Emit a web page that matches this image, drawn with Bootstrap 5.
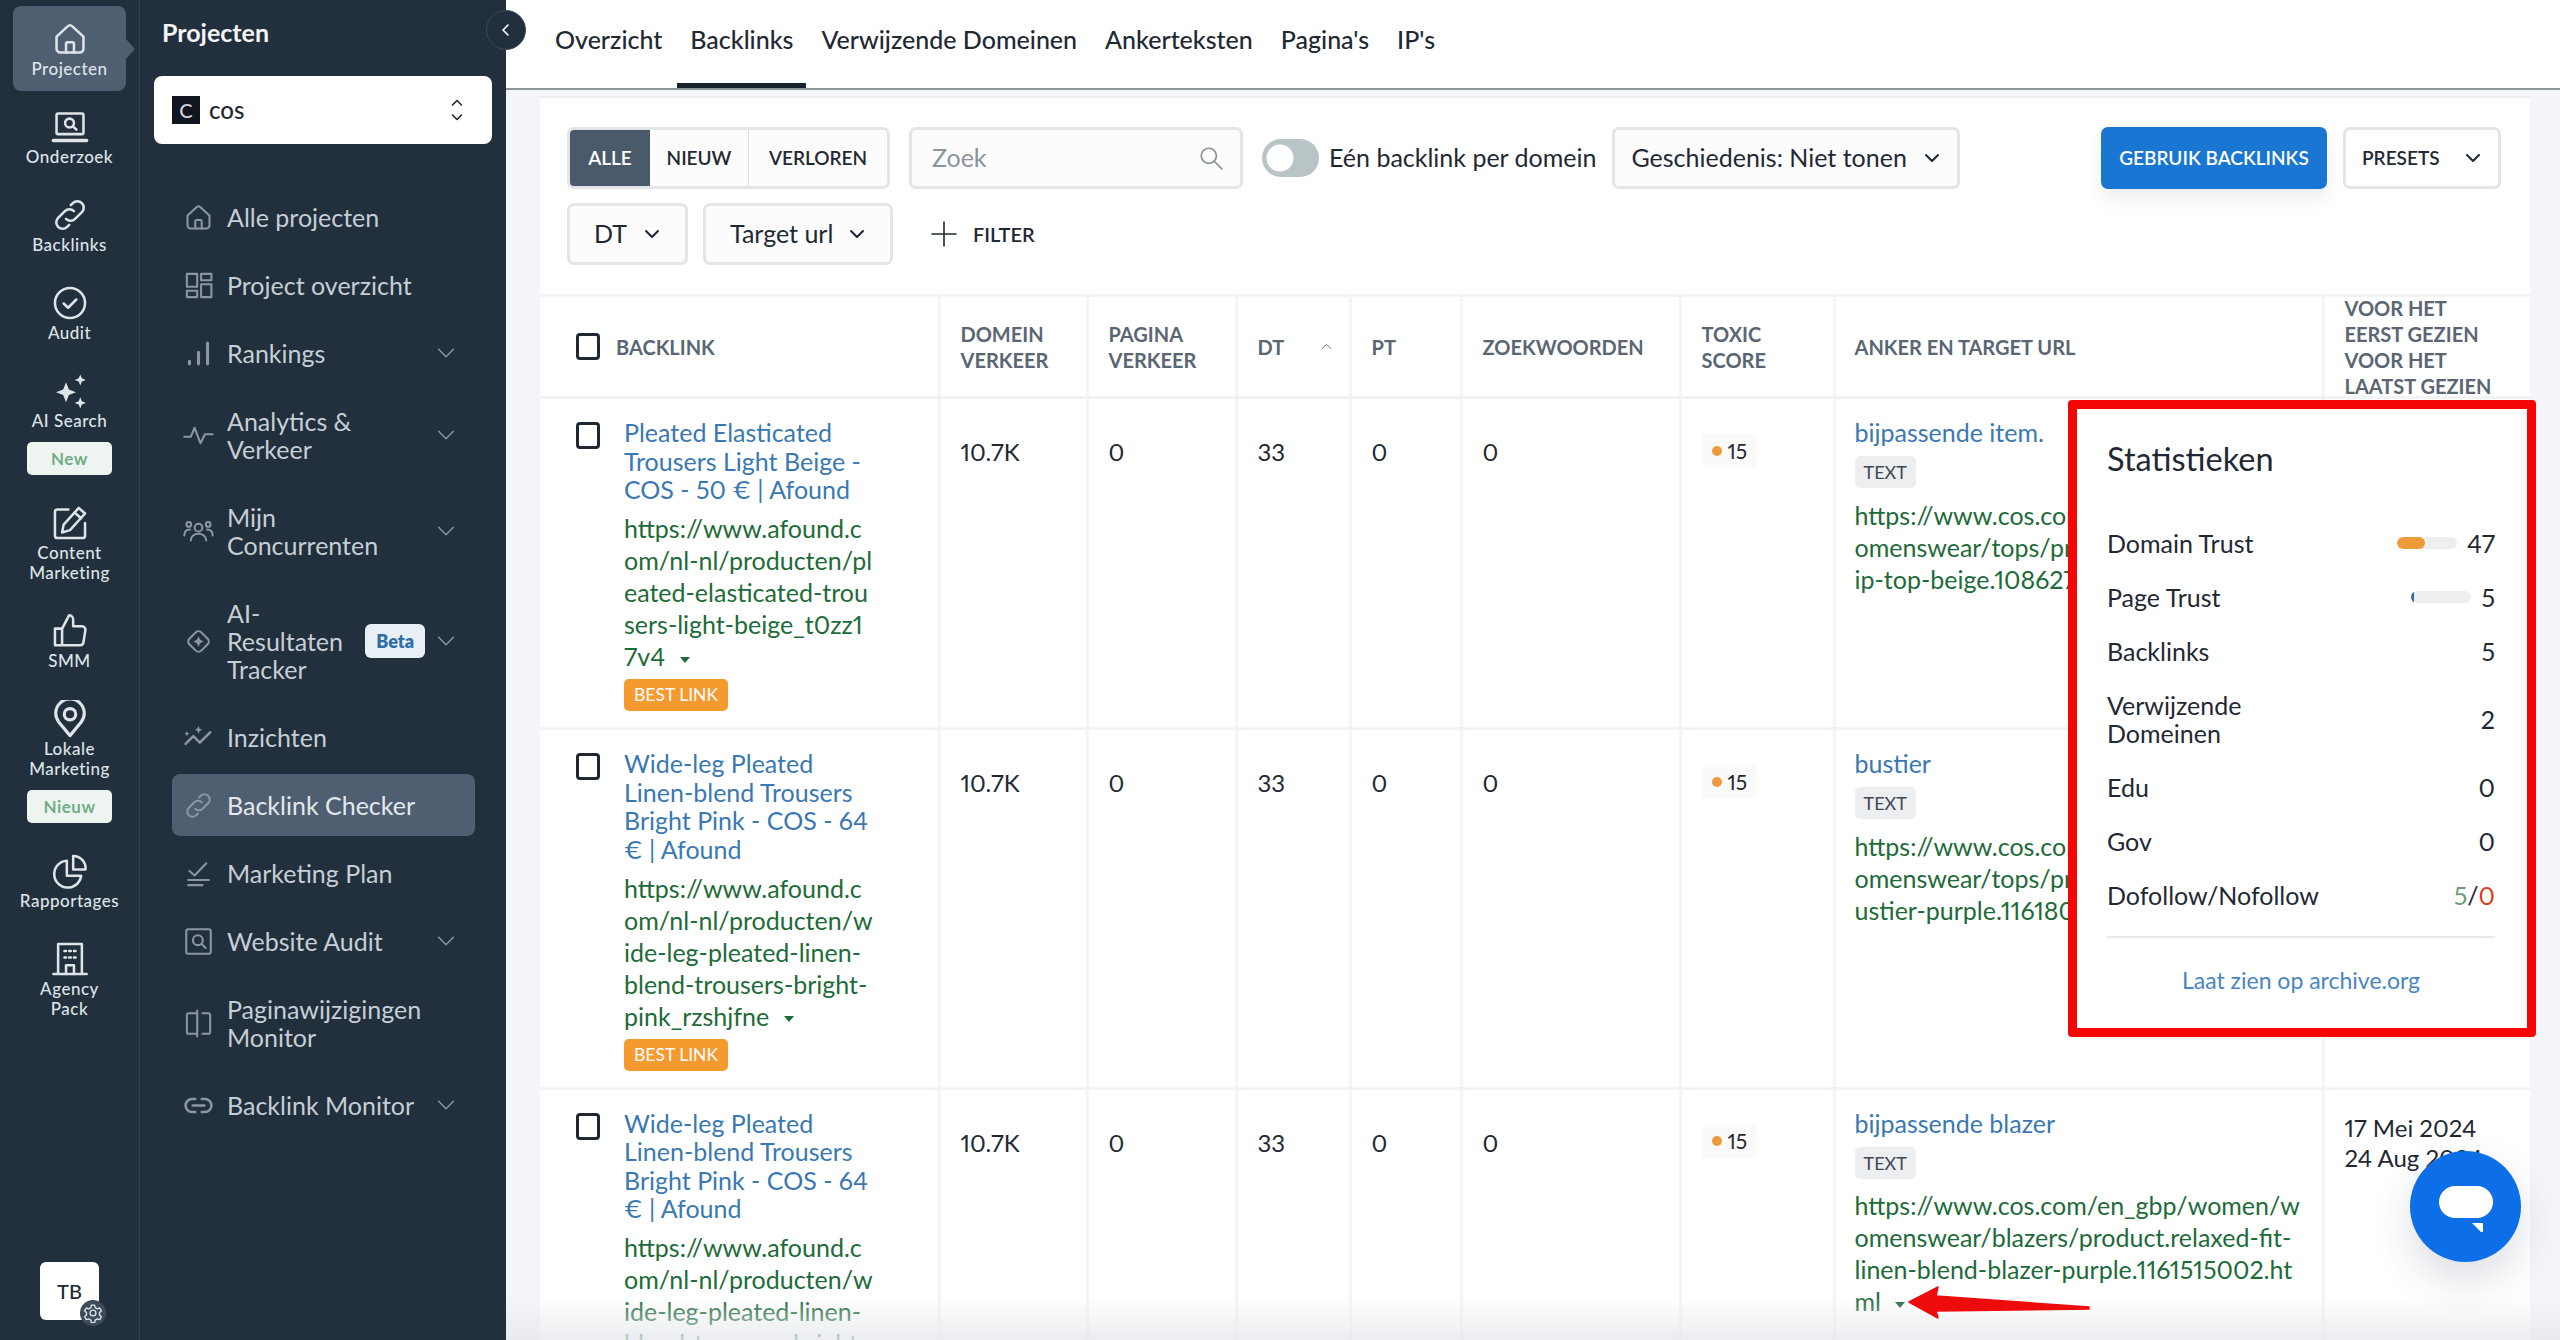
<!DOCTYPE html>
<html lang="nl">
<head>
  <meta charset="UTF-8" />
  <meta name="viewport" content="width=device-width, initial-scale=1.0"/>
  <title>Backlink Checker</title>
  <link href="https://cdn.jsdelivr.net/npm/bootstrap@5.3.3/dist/css/bootstrap.min.css" rel="stylesheet" />
  <style>
    html, body { height: 1340px; overflow: hidden; }
    body { font-family: "Lato", "Liberation Sans", sans-serif; font-size: 24px; color: #1f2933; background: #f4f5f9; font-variant-numeric: proportional-nums; }
    .app-shell { height: 1340px; position: relative; overflow: hidden; }
    .ico { fill: none; stroke: currentColor; stroke-width: 1.6; stroke-linecap: round; stroke-linejoin: round; flex: none; }

    /* icon rail */
    .rail { width: 140px; flex: none; background: #222f3c; border-right: 1px solid #34414e; padding: 6px 13px 20px; color: #dfe4e9; }
    .rail-item { padding: 18px 0 12px; margin-bottom: 3px; border-radius: 8px; font-size: 17px; line-height: 20px; font-weight: 500; text-align: center; position: relative; letter-spacing: .5px; }
    .rail-item .ico { width: 38px; height: 38px; display: block; margin: -4px auto 1px; }
    .rail-item.on { background: #4f5e70; }
    .rail-item.on::after { content: ""; position: absolute; right: -9px; top: 33px; border-left: 9px solid #4f5e70; border-top: 10px solid transparent; border-bottom: 10px solid transparent; }
    .rail-pill { background: #eef5f1; color: #72ad88; font-weight: 700; font-size: 17px; border-radius: 5px; margin: 11px 14px 0; height: 33px; line-height: 33px; }
    .rail-user { width: 59px; height: 58px; background: #fff; color: #1f2933; border-radius: 6px; font-size: 20px; line-height: 58px; text-align: center; margin: auto auto 0; position: relative; font-weight: 500; }
    .rail-gear { position: absolute; right: -7px; bottom: -6px; width: 26px; height: 26px; border-radius: 50%; background: #3d4b5a; color: #dfe4e9; display: flex; align-items: center; justify-content: center; }

    /* second panel */
    .side-panel { width: 366px; flex: none; background: #222f3c; padding: 0 14px 0 14px; color: #c6ced6; }
    .side-title { font-size: 25px; font-weight: 700; color: #f3f5f7; line-height: 32px; padding: 16px 0 0 8px; }
    .project-pick { height: 68px; margin: 28px 0 39px; background: #fff; border-radius: 8px; color: #1f2933; padding: 0 29px 0 18px; font-size: 24px; font-weight: 500; }
    .project-logo { width: 28px; height: 28px; background: #10151f; color: #cfd3d8; font-size: 20px; line-height: 28px; text-align: center; margin-right: 9px; }
    .side-link { display: flex; align-items: center; margin-left: 18px; width: 303px; min-height: 68px; padding: 20px 0 20px 11px; line-height: 28px; font-size: 25px; color: #c6ced6; border-radius: 8px; text-decoration: none; }
    .side-link > .ico { width: 31px; height: 31px; color: #8a97a3; margin: -2px 13px -2px 0; }
    .side-link > .ico.side-chev { width: 22px; height: 22px; margin: 0 18px 0 0; }
    .side-link.on { background: #4f5e70; color: #e4e8ec; min-height: 62px; margin-top: 3px; margin-bottom: 3px; padding-top: 17px; padding-bottom: 17px; }
    .side-label { flex: 1; min-width: 0; }
    .beta-tag { background: #e9f0f5; color: #2f6ea8; font-size: 18px; font-weight: 800; border-radius: 6px; padding: 0 11px; line-height: 34px; margin-right: 10px; }
    .collapse-btn { position: absolute; left: 486px; top: 10px; width: 40px; height: 40px; border-radius: 50%; background: #222f3c; border: 1px solid #3c4956; color: #fff; display: flex; align-items: center; justify-content: center; z-index: 3; }

    /* top tabs */
    .main-col { min-width: 0; background: #f4f5f9; }
    .tabbar { height: 90px; background: #fff; border-bottom: 2px solid #8e969d; padding-left: 36px; flex: none; }
    .tabbar .nav-link { color: #1f2933; font-size: 25px; padding: 21px 13px 0; height: 88px; margin-right: 2px; font-weight: 500; }
    .tabbar .nav-link.on { border-bottom: 5px solid #17212b; }

    /* filters */
    .work-card { background: #fff; margin: 6px 30px 0 34px; border-top: 2px solid #eceef1; }
    .filter-box { padding: 29px 29px 0 27px; }
    .ctl { height: 62px; background: #fcfcfd; border: 3px solid #e3e5e9; border-radius: 7px; font-size: 25px; display: flex; align-items: center; color: #1f2933; flex: none; }
    .seg-btn { font-size: 19px; font-weight: 600; padding: 0; height: 100%; border: 0; background: transparent; color: #1f2933; }
    .seg-btn.on { background: #4a5a6b; color: #fff; border-radius: 4px 0 0 4px; }
    .search-hint { color: #8b949c; }
    .one-switch.form-check-input { width: 57px; height: 38px; margin: 0; border: 0; background-color: #b9c4c6; background-image: radial-gradient(circle at 18px 19px, #fff 13px, transparent 14px); }
    .ghost-chev { width: 18px; height: 18px; color: #1f2933; stroke-width: 2.8; }
    .use-btn { height: 62px; background: #1976d2; border: 0; border-radius: 7px; color: #fff; font-size: 19px; font-weight: 600; width: 226px; box-shadow: 0 10px 18px rgba(25,40,70,.08); }
    .preset-btn { background: #fff; font-size: 19px; font-weight: 600; }
    .filter-add { font-size: 20px; font-weight: 600; margin-left: 15px; }

    /* table */
    .bl-table { table-layout: fixed; width: 1990px; margin: 29px 0 0; border-top: 3px solid #f2f3f5; font-size: 25px; }
    .bl-table > * > tr > * { padding: 0 20px; border-bottom: 3px solid #f2f3f5; border-right: 3px solid #f4f5f7; color: #1f2933; box-shadow: none; }
    .bl-table > * > tr > *:last-child { border-right: 0; }
    .bl-table th { font-size: 20px; line-height: 26px; font-weight: 700; color: #5a6673 !important; height: 102px; vertical-align: middle; text-transform: uppercase; padding-right: 0 !important; }
    .th-tall { margin: -4px 0; }
    .bl-table td { vertical-align: top; }
    .num-cell { padding-top: 39px !important; line-height: 28px; font-size: 24px; }
    .tick { width: 24px; height: 27px; border: 3px solid #1f2933; border-radius: 4px; flex: none; background: #fff; }
    .link-cell { padding: 19px 10px 16px 36px !important; }
    .page-title { color: #3a78b3; line-height: 28.5px; text-decoration: none; display: block; }
    .page-url { color: #1d6b39; line-height: 32px; margin-top: 8.5px; white-space: nowrap; }
    .drop-tri { display: inline-block; border-top: 6px solid #1d6b39; border-left: 5px solid transparent; border-right: 5px solid transparent; vertical-align: middle; margin-left: 8px; }
    .best-tag { background: #f59a2f; color: #fff; font-size: 17.500px; font-weight: 400; border-radius: 5px; padding: 0 10px; line-height: 32px; display: inline-block; margin-top: 7px; }
    .toxic-tag { background: #fafaf8; border-radius: 5px; display: inline-flex; align-items: center; gap: 6px; padding: 0 10px; height: 33px; font-size: 21px; margin-top: -4px; vertical-align: top; }
    .toxic-dot { width: 10px; height: 10px; border-radius: 50%; background: #ec9a3c; }
    .anchor-cell { padding: 19px 10px 0 19px !important; white-space: nowrap; overflow: hidden; }
    .anchor-link { color: #3a78b3; line-height: 28px; text-decoration: none; display: block; }
    .type-tag { background: #eceef0; color: #3f4953; font-size: 18px; font-weight: 400; border-radius: 5px; padding: 0 9px; line-height: 32px; display: inline-block; margin-top: 10px; }
    .anchor-cell .page-url { margin-top: 10px; }
    .date-cell { padding-top: 23px !important; line-height: 30px; white-space: nowrap; font-size: 24px; }

    /* stats popover */
    .stats-pop { position: absolute; left: 2068px; top: 400px; width: 468px; height: 637px; background: #fff; border: 9px solid #f60505; border-radius: 4px; padding: 31px 32px 0 30px; z-index: 2; font-size: 25px; }
    .stats-head { font-size: 32.500px; line-height: 38px; margin-bottom: 38px; color: #1f2933; }
    .stat-row { min-height: 54px; line-height: 28px; padding: 13px 0; color: #1f2933; }
    .stat-bar { height: 12px; background: #eceef0; border-radius: 6px; width: 60px; }
    .stat-bar .progress-bar { border-radius: 6px; }
    .stat-val { gap: 10px; }
    .stats-foot { border-top: 2px solid #e7e9ec; margin-top: 14px; padding-top: 28px; text-align: center; color: #4a86c0; line-height: 28px; font-size: 23px; }

    /* overlays */
    .bottom-fade { position: absolute; left: 506px; right: 0; bottom: 0; height: 44px; background: linear-gradient(to bottom, rgba(232,234,238,0), rgba(230,232,236,.8)); pointer-events: none; z-index: 1; }
    .chat-fab { position: absolute; left: 2410px; top: 1151px; width: 111px; height: 111px; border-radius: 50%; background: #0d6fe8; z-index: 2; display: flex; align-items: center; justify-content: center; box-shadow: 0 18px 40px rgba(30,50,90,.16); }
    .red-arrow { position: absolute; left: 1905px; top: 1284px; z-index: 2; }
  </style>
</head>
<body>
  <svg width="0" height="0" class="position-absolute">
    <symbol id="i-home" viewBox="0 0 24 24"><path d="M3.5 10.5 10.5 4a2.2 2.2 0 0 1 3 0l7 6.500V18a2.500 2.500 0 0 1-2.500 2.500H6A2.500 2.500 0 0 1 3.500 18z"/><path d="M9.500 20.500V15a1 1 0 0 1 1-1h3a1 1 0 0 1 1 1v5.500"/></symbol>
    <symbol id="i-research" viewBox="0 0 24 24"><rect x="3.500" y="3.500" width="17" height="13" rx="1"/><path d="M1.500 20.500h21" stroke-width="2.200"/><circle cx="11.700" cy="9.500" r="2.800"/><path d="m13.800 11.600 2.200 2"/></symbol>
    <symbol id="i-link" viewBox="0 0 24 24"><path d="M9.500 14.500a4 4 0 0 0 5.700 0l4.300-4.300a4 4 0 0 0-5.700-5.700l-1.300 1.300"/><path d="M14.500 9.500a4 4 0 0 0-5.700 0l-4.300 4.300a4 4 0 0 0 5.700 5.700l1.300-1.300"/></symbol>
    <symbol id="i-check" viewBox="0 0 24 24"><circle cx="12" cy="12" r="9.500"/><path d="m8 12.300 2.800 2.700 5.200-5.200"/></symbol>
    <symbol id="i-spark" viewBox="0 0 24 24"><path fill="currentColor" stroke="none" d="M9.500 6.500 11.300 11l4.500 1.800-4.500 1.800-1.800 4.500-1.800-4.500-4.500-1.800L7.700 11zM18.500 1.500l1 2.500 2.500 1-2.500 1-1 2.500-1-2.500-2.500-1 2.500-1zM18.500 16l1 2.500 2.500 1-2.500 1-1 2.500-1-2.500-2.500-1 2.500-1z"/></symbol>
    <symbol id="i-edit" viewBox="0 0 24 24"><path d="M11 3.500H4A1.500 1.500 0 0 0 2.500 5v15A1.500 1.500 0 0 0 4 21.500h16a1.500 1.500 0 0 0 1.500-1.500v-8"/><path d="m17.500 2.500 4 3.500L12 16.500l-5 1.500 1-5z"/><path d="m15 5.500 4 3.500"/></symbol>
    <symbol id="i-thumb" viewBox="0 0 24 24"><path d="M7 10.500H2.500V21H7zM7 10.500l4.500-8.500a2.800 2.800 0 0 1 2.500 3v4h5.500a2.200 2.200 0 0 1 2.200 2.600l-1.200 7.500a2.200 2.200 0 0 1-2.200 1.900H7"/></symbol>
    <symbol id="i-pin" viewBox="0 0 24 24"><path d="M12 22.500 5 14a9 9 0 1 1 14 0z" stroke-width="2"/><circle cx="12" cy="9" r="3.600" stroke-width="2"/></symbol>
    <symbol id="i-pie" viewBox="0 0 24 24"><path d="M10 5.500a8.500 8.500 0 1 0 9 9.500h-9z"/><path d="M14 2.500a7.800 7.800 0 0 1 7.800 8.500H14z"/></symbol>
    <symbol id="i-build" viewBox="0 0 24 24"><path d="M4.500 21.500v-19h15v19M1.500 21.500h21"/><path d="M9.500 21.500V16h5v5.500M8.500 7h1M11.500 7h1M14.500 7h1M8.500 11h1M11.500 11h1M14.500 11h1"/></symbol>
    <symbol id="i-bars" viewBox="0 0 24 24"><path stroke-width="2.400" d="M5 20v-2M12 20v-9M19 20V4"/></symbol>
    <symbol id="i-grid" viewBox="0 0 24 24"><rect x="3" y="3" width="8" height="10"/><rect x="14" y="3" width="8" height="5"/><rect x="3" y="16" width="8" height="5"/><rect x="14" y="11" width="8" height="10"/></symbol>
    <symbol id="i-pulse" viewBox="0 0 24 24"><path d="M1 13h5l3-7 4.500 12L17 11h6"/></symbol>
    <symbol id="i-users" viewBox="0 0 24 24"><circle cx="12" cy="9" r="3"/><circle cx="4.500" cy="6.500" r="1.800"/><circle cx="19.500" cy="6.500" r="1.800"/><path d="M6 19c0-7 12-7 12 0M1 15c0-3 2-4.500 4.500-4.500M23 15c0-3-2-4.500-4.500-4.500"/></symbol>
    <symbol id="i-track" viewBox="0 0 24 24"><rect x="5.500" y="5.500" width="13" height="13" rx="3" transform="rotate(45 12 12)"/><path fill="currentColor" stroke="none" d="m12 8 1.300 2.700L16 12l-2.700 1.300L12 16l-1.300-2.700L8 12l2.700-1.300z"/></symbol>
    <symbol id="i-insight" viewBox="0 0 24 24"><path stroke-width="2" d="m2 17 6-6 5 5 8-8"/><path fill="currentColor" stroke="none" d="m12 3 1 2.200 2 .8-2 .8L12 9l-1-2.200-2-.8 2-.8zM3 7l.6 1.400L5 9l-1.400.6L3 11l-.6-1.400L1 9l1.400-.6z"/></symbol>
    <symbol id="i-plan" viewBox="0 0 24 24"><path d="m5 10 4 3.500L18 4M4 17h16M4 21h11"/></symbol>
    <symbol id="i-audit" viewBox="0 0 24 24"><rect x="2.500" y="2.500" width="19" height="19" rx="1.500"/><circle cx="11.500" cy="11" r="3.800"/><path d="m14.500 14 3 3"/></symbol>
    <symbol id="i-split" viewBox="0 0 24 24"><path d="M11 4H4.500A1.500 1.500 0 0 0 3 5.500v13A1.500 1.500 0 0 0 4.500 20H11M11 2v20M15 4h4.500A1.500 1.500 0 0 1 21 5.500v13a1.500 1.500 0 0 1-1.500 1.500H15"/></symbol>
    <symbol id="i-chain" viewBox="0 0 24 24"><path stroke-width="2" d="M9.500 7H7a5 5 0 0 0 0 10h2.500M14.500 7H17a5 5 0 0 1 0 10h-2.500M7.500 12h9"/></symbol>
    <symbol id="i-chev" viewBox="0 0 24 24"><path d="m4 8 8 8 8-8"/></symbol>
    <symbol id="i-search" viewBox="0 0 24 24"><circle cx="10" cy="10" r="7"/><path d="m15 15 7 7"/></symbol>
    <symbol id="i-gear" viewBox="0 0 24 24"><circle cx="12" cy="12" r="3.500"/><path d="M10 2.500h4l.6 3 2.600 1.500 2.900-1 2 3.500-2.300 2v3l2.300 2-2 3.500-2.900-1-2.600 1.500-.6 3h-4l-.6-3-2.600-1.500-2.900 1-2-3.500 2.300-2v-3l-2.300-2 2-3.500 2.900 1L9.400 5.500z"/></symbol>
  </svg>

  <div class="app-shell d-flex">
    <!-- Icon rail -->
    <nav class="rail d-flex flex-column">
      <div class="rail-item on"><svg class="ico"><use href="#i-home"/></svg>Projecten</div>
      <div class="rail-item"><svg class="ico"><use href="#i-research"/></svg>Onderzoek</div>
      <div class="rail-item"><svg class="ico"><use href="#i-link"/></svg>Backlinks</div>
      <div class="rail-item"><svg class="ico"><use href="#i-check"/></svg>Audit</div>
      <div class="rail-item"><svg class="ico"><use href="#i-spark"/></svg>AI Search<div class="rail-pill">New</div></div>
      <div class="rail-item"><svg class="ico"><use href="#i-edit"/></svg>Content Marketing</div>
      <div class="rail-item"><svg class="ico"><use href="#i-thumb"/></svg>SMM</div>
      <div class="rail-item"><svg class="ico"><use href="#i-pin"/></svg>Lokale Marketing<div class="rail-pill">Nieuw</div></div>
      <div class="rail-item"><svg class="ico"><use href="#i-pie"/></svg>Rapportages</div>
      <div class="rail-item"><svg class="ico"><use href="#i-build"/></svg>Agency<br>Pack</div>
      <div class="rail-user">TB<span class="rail-gear"><svg class="ico" width="20" height="20"><use href="#i-gear"/></svg></span></div>
    </nav>

    <!-- Project menu -->
    <aside class="side-panel">
      <div class="side-title">Projecten</div>
      <div class="project-pick d-flex align-items-center">
        <span class="project-logo">C</span>
        <span class="flex-grow-1">cos</span>
        <svg class="ico" width="12" height="24" viewBox="0 0 12 24" stroke-width="2.200"><path d="m1.500 7 4.500-4.500L10.500 7M1.500 17l4.500 4.500 4.500-4.500"/></svg>
      </div>
      <a class="side-link" href="#"><svg class="ico"><use href="#i-home"/></svg><span class="side-label">Alle projecten</span></a>
      <a class="side-link" href="#"><svg class="ico"><use href="#i-grid"/></svg><span class="side-label">Project overzicht</span></a>
      <a class="side-link" href="#"><svg class="ico"><use href="#i-bars"/></svg><span class="side-label">Rankings</span><svg class="ico side-chev"><use href="#i-chev"/></svg></a>
      <a class="side-link" href="#"><svg class="ico"><use href="#i-pulse"/></svg><span class="side-label">Analytics &amp;<br>Verkeer</span><svg class="ico side-chev"><use href="#i-chev"/></svg></a>
      <a class="side-link" href="#"><svg class="ico"><use href="#i-users"/></svg><span class="side-label">Mijn<br>Concurrenten</span><svg class="ico side-chev"><use href="#i-chev"/></svg></a>
      <a class="side-link" href="#"><svg class="ico"><use href="#i-track"/></svg><span class="side-label">AI-<br>Resultaten<br>Tracker</span><span class="beta-tag">Beta</span><svg class="ico side-chev"><use href="#i-chev"/></svg></a>
      <a class="side-link" href="#"><svg class="ico"><use href="#i-insight"/></svg><span class="side-label">Inzichten</span></a>
      <a class="side-link on" href="#"><svg class="ico"><use href="#i-link"/></svg><span class="side-label">Backlink Checker</span></a>
      <a class="side-link" href="#"><svg class="ico"><use href="#i-plan"/></svg><span class="side-label">Marketing Plan</span></a>
      <a class="side-link" href="#"><svg class="ico"><use href="#i-audit"/></svg><span class="side-label">Website Audit</span><svg class="ico side-chev"><use href="#i-chev"/></svg></a>
      <a class="side-link" href="#"><svg class="ico"><use href="#i-split"/></svg><span class="side-label">Paginawijzigingen<br>Monitor</span></a>
      <a class="side-link" href="#"><svg class="ico"><use href="#i-chain"/></svg><span class="side-label">Backlink Monitor</span><svg class="ico side-chev"><use href="#i-chev"/></svg></a>
    </aside>

    <div class="collapse-btn"><svg class="ico" width="16" height="16" viewBox="0 0 16 16" stroke-width="2.400"><path d="M10 3 5 8l5 5"/></svg></div>

    <!-- Main content -->
    <main class="main-col flex-grow-1 d-flex flex-column">
      <ul class="nav tabbar">
        <li class="nav-item"><a class="nav-link" href="#">Overzicht</a></li>
        <li class="nav-item"><a class="nav-link on" href="#">Backlinks</a></li>
        <li class="nav-item"><a class="nav-link" href="#">Verwijzende Domeinen</a></li>
        <li class="nav-item"><a class="nav-link" href="#">Ankerteksten</a></li>
        <li class="nav-item"><a class="nav-link" href="#">Pagina's</a></li>
        <li class="nav-item"><a class="nav-link" href="#">IP's</a></li>
      </ul>

      <div class="work-card">
        <div class="filter-box">
          <div class="d-flex align-items-center">
            <div class="ctl" style="width:323px">
              <button class="seg-btn on" style="width:80px">ALLE</button>
              <button class="seg-btn" style="width:98px">NIEUW</button>
              <button class="seg-btn flex-grow-1 border-start">VERLOREN</button>
            </div>
            <div class="ctl search-hint justify-content-between px-3" style="width:334px;margin-left:19px">
              <span class="ps-1">Zoek</span>
              <svg class="ico" width="26" height="26" stroke-width="2"><use href="#i-search"/></svg>
            </div>
            <div class="form-check form-switch m-0 p-0 d-flex" style="margin-left:19px !important"><input class="form-check-input one-switch" type="checkbox" role="switch"></div>
            <span class="me-3" style="font-size:25px;margin-left:10px">Eén backlink per domein</span>
            <div class="ctl px-3" style="width:348px">
              <span>Geschiedenis: Niet tonen</span>
              <svg class="ico ghost-chev ms-3"><use href="#i-chev"/></svg>
            </div>
            <button class="use-btn ms-auto">GEBRUIK BACKLINKS</button>
            <div class="ctl preset-btn justify-content-between px-3 ms-3" style="width:158px">
              <span>PRESETS</span>
              <svg class="ico ghost-chev"><use href="#i-chev"/></svg>
            </div>
          </div>
          <div class="d-flex align-items-center" style="margin-top:14px">
            <div class="ctl justify-content-between px-4" style="width:121px"><span>DT</span><svg class="ico ghost-chev"><use href="#i-chev"/></svg></div>
            <div class="ctl justify-content-between px-4" style="width:190px;margin-left:15px"><span>Target url</span><svg class="ico ghost-chev"><use href="#i-chev"/></svg></div>
            <svg class="ico" width="28" height="28" viewBox="0 0 28 28" stroke-width="3.200" style="color:#1f2933;margin-left:37px"><path d="M14 2v24M2 14h24"/></svg>
            <span class="filter-add">FILTER</span>
          </div>
        </div>

        <table class="table bl-table">
          <colgroup>
            <col style="width:399px"><col style="width:148px"><col style="width:149px"><col style="width:114px"><col style="width:111px"><col style="width:219px"><col style="width:154px"><col style="width:489px"><col style="width:207px">
          </colgroup>
          <thead>
            <tr>
              <th style="padding-left:36px"><div class="d-flex align-items-center gap-3"><span class="tick"></span>Backlink</div></th>
              <th>Domein<br>Verkeer</th>
              <th>Pagina<br>Verkeer</th>
              <th><div class="d-flex align-items-center justify-content-between pe-3">DT<svg class="ico" width="13" height="13" stroke-width="2.800"><use href="#i-chev" transform="rotate(180 6.500 6.500)"/></svg></div></th>
              <th>PT</th>
              <th>Zoekwoorden</th>
              <th>Toxic<br>Score</th>
              <th style="padding-left:19px">Anker en target URL</th>
              <th><div class="th-tall">Voor het<br>eerst gezien<br>voor het<br>laatst gezien</div></th>
            </tr>
          </thead>
          <tbody>
            <tr>
              <td class="link-cell">
                <div class="d-flex gap-4"><span class="tick mt-1"></span>
                  <div>
                    <a class="page-title" href="#">Pleated Elasticated<br>Trousers Light Beige -<br>COS - 50 € | Afound</a>
                    <div class="page-url">https://www.afound.c<br>om/nl-nl/producten/pl<br>eated-elasticated-trou<br>sers-light-beige_t0zz1<br>7v4 <span class="drop-tri"></span></div>
                    <span class="best-tag">BEST LINK</span>
                  </div>
                </div>
              </td>
              <td class="num-cell">10.7K</td><td class="num-cell">0</td><td class="num-cell">33</td><td class="num-cell">0</td><td class="num-cell">0</td>
              <td class="num-cell"><span class="toxic-tag"><span class="toxic-dot"></span>15</span></td>
              <td class="anchor-cell">
                <a class="anchor-link" href="#">bijpassende item.</a>
                <span class="type-tag">TEXT</span>
                <div class="page-url">https://www.cos.com/en_gbp/women/w<br>omenswear/tops/product.slip-top<br>ip-top-beige.1086270</div>
              </td>
              <td class="date-cell"></td>
            </tr>
            <tr>
              <td class="link-cell">
                <div class="d-flex gap-4"><span class="tick mt-1"></span>
                  <div>
                    <a class="page-title" href="#">Wide-leg Pleated<br>Linen-blend Trousers<br>Bright Pink - COS - 64<br>€ | Afound</a>
                    <div class="page-url">https://www.afound.c<br>om/nl-nl/producten/w<br>ide-leg-pleated-linen-<br>blend-trousers-bright-<br>pink_rzshjfne <span class="drop-tri"></span></div>
                    <span class="best-tag">BEST LINK</span>
                  </div>
                </div>
              </td>
              <td class="num-cell">10.7K</td><td class="num-cell">0</td><td class="num-cell">33</td><td class="num-cell">0</td><td class="num-cell">0</td>
              <td class="num-cell"><span class="toxic-tag"><span class="toxic-dot"></span>15</span></td>
              <td class="anchor-cell">
                <a class="anchor-link" href="#">bustier</a>
                <span class="type-tag">TEXT</span>
                <div class="page-url">https://www.cos.com/en_gbp/women/w<br>omenswear/tops/product.bustier<br>ustier-purple.1161800</div>
              </td>
              <td class="date-cell"></td>
            </tr>
            <tr>
              <td class="link-cell">
                <div class="d-flex gap-4"><span class="tick mt-1"></span>
                  <div>
                    <a class="page-title" href="#">Wide-leg Pleated<br>Linen-blend Trousers<br>Bright Pink - COS - 64<br>€ | Afound</a>
                    <div class="page-url">https://www.afound.c<br>om/nl-nl/producten/w<br>ide-leg-pleated-linen-<br>blend-trousers-bright-<br>pink_rzshjfne <span class="drop-tri"></span></div>
                  </div>
                </div>
              </td>
              <td class="num-cell">10.7K</td><td class="num-cell">0</td><td class="num-cell">33</td><td class="num-cell">0</td><td class="num-cell">0</td>
              <td class="num-cell"><span class="toxic-tag"><span class="toxic-dot"></span>15</span></td>
              <td class="anchor-cell">
                <a class="anchor-link" href="#">bijpassende blazer</a>
                <span class="type-tag">TEXT</span>
                <div class="page-url">https://www.cos.com/en_gbp/women/w<br>omenswear/blazers/product.relaxed-fit-<br>linen-blend-blazer-purple.1161515002.ht<br>ml <span class="drop-tri"></span></div>
              </td>
              <td class="date-cell">17 Mei 2024<br>24 Aug 2024</td>
            </tr>
          </tbody>
        </table>
      </div>
    </main>

    <!-- Statistics popover -->
    <div class="stats-pop">
      <div class="stats-head">Statistieken</div>
      <div class="stat-row d-flex align-items-center justify-content-between"><span>Domain Trust</span><span class="d-flex align-items-center stat-val"><span class="progress stat-bar"><span class="progress-bar" style="width:47%;background:#ed9b3a"></span></span>47</span></div>
      <div class="stat-row d-flex align-items-center justify-content-between"><span>Page Trust</span><span class="d-flex align-items-center stat-val"><span class="progress stat-bar"><span class="progress-bar" style="width:5%;background:#2f6ea8"></span></span>5</span></div>
      <div class="stat-row d-flex align-items-center justify-content-between"><span>Backlinks</span><span>5</span></div>
      <div class="stat-row d-flex align-items-center justify-content-between"><span>Verwijzende<br>Domeinen</span><span>2</span></div>
      <div class="stat-row d-flex align-items-center justify-content-between"><span>Edu</span><span>0</span></div>
      <div class="stat-row d-flex align-items-center justify-content-between"><span>Gov</span><span>0</span></div>
      <div class="stat-row d-flex align-items-center justify-content-between"><span>Dofollow/Nofollow</span><span><span style="color:#6f9c7c">5</span>/<span style="color:#d9411e">0</span></span></div>
      <div class="stats-foot">Laat zien op archive.org</div>
    </div>

    <div class="bottom-fade"></div>

    <div class="chat-fab">
      <svg width="54" height="50" viewBox="0 0 54 50"><rect x="0" y="4" width="54" height="32" rx="16" fill="#fff"/><path d="M33 41h11v11z" fill="#fff"/></svg>
    </div>

    <svg class="red-arrow" width="190" height="38" viewBox="0 0 190 38"><path d="M4 18 33 3l-2 9 153 11v2L31 27l2 7z" fill="#ee0b0b" stroke="#ee0b0b" stroke-width="1.500" stroke-linejoin="round"/></svg>
  </div>

  <script src="https://cdn.jsdelivr.net/npm/bootstrap@5.3.3/dist/js/bootstrap.bundle.min.js"></script>
</body>
</html>
